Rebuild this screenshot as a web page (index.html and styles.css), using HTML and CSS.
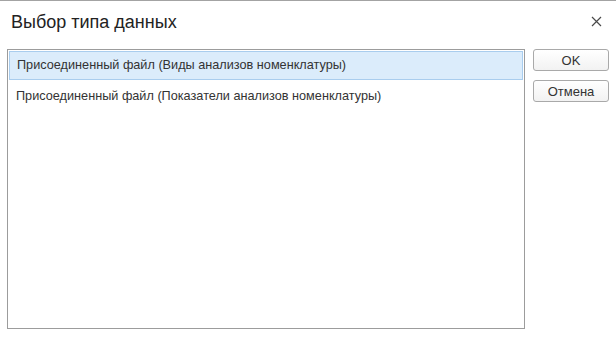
FILE: index.html
```html
<!DOCTYPE html>
<html lang="ru">
<head>
  <meta charset="UTF-8" />
  <title>Выбор типа данных</title>
  <link rel="stylesheet" href="styles.css">
</head>
<body>
  <div class="dialog">
    <div class="dialog-header">
      <h1 class="dialog-title">Выбор типа данных</h1>
      <button class="close-button" aria-label="Закрыть">
        <svg width="11" height="11" viewBox="0 0 11 11">
          <path d="M1 1 L10 10 M10 1 L1 10" stroke="#4a4a4a" stroke-width="1.2" fill="none" />
        </svg>
      </button>
    </div>

    <div class="dialog-body">
      <div class="type-list">
        <div class="type-row selected">Присоединенный файл (Виды анализов номенклатуры)</div>
        <div class="type-row">Присоединенный файл (Показатели анализов номенклатуры)</div>
      </div>

      <div class="dialog-buttons">
        <button class="btn">OK</button>
        <button class="btn">Отмена</button>
      </div>
    </div>
  </div>
</body>
</html>
```

FILE: styles.css
```css
body {
  margin: 0;
  padding: 0;
  background: #fff;
  font-family: 'Liberation Sans', Arial, sans-serif;
  color: #333;
}

.dialog {
  border-top: 1px solid #a3a3a3;
  height: 336px;
  display: flex;
  flex-direction: column;
}

.dialog-header {
  height: 48px;
  display: flex;
  justify-content: space-between;
  align-items: flex-start;
  padding: 0 14px 0 11px;
}

.dialog-title {
  margin: 0;
  margin-top: 10px;
  font-size: 18px;
  font-weight: normal;
  color: #222;
  line-height: 22px;
}

.close-button {
  margin-top: 15px;
  padding: 0;
  border: none;
  background: none;
  width: 11px;
  height: 11px;
  display: flex;
}

.dialog-body {
  display: flex;
  gap: 8px;
  padding: 0 7px 0 7px;
}

.type-list {
  width: 516px;
  height: 278px;
  border: 1px solid #9c9c9c;
  display: flex;
  flex-direction: column;
  gap: 2px;
}

.type-row {
  height: 29px;
  line-height: 29px;
  padding-left: 8px;
  font-size: 12.7px;
  color: #333;
  box-sizing: border-box;
}

.type-row.selected {
  margin: 1px 1px 0 1px;
  padding-left: 7px;
  line-height: 27px;
  background: #dbecfb;
  border: 1px solid #a9cdee;
}

.dialog-buttons {
  display: flex;
  flex-direction: column;
  gap: 9px;
}

.btn {
  width: 76px;
  height: 22px;
  padding: 0;
  border: 1px solid #a9a9a9;
  border-radius: 3px;
  background: linear-gradient(#ffffff, #f2f2f2);
  font-family: 'Liberation Sans', Arial, sans-serif;
  font-size: 13px;
  color: #333;
  cursor: pointer;
}
```
